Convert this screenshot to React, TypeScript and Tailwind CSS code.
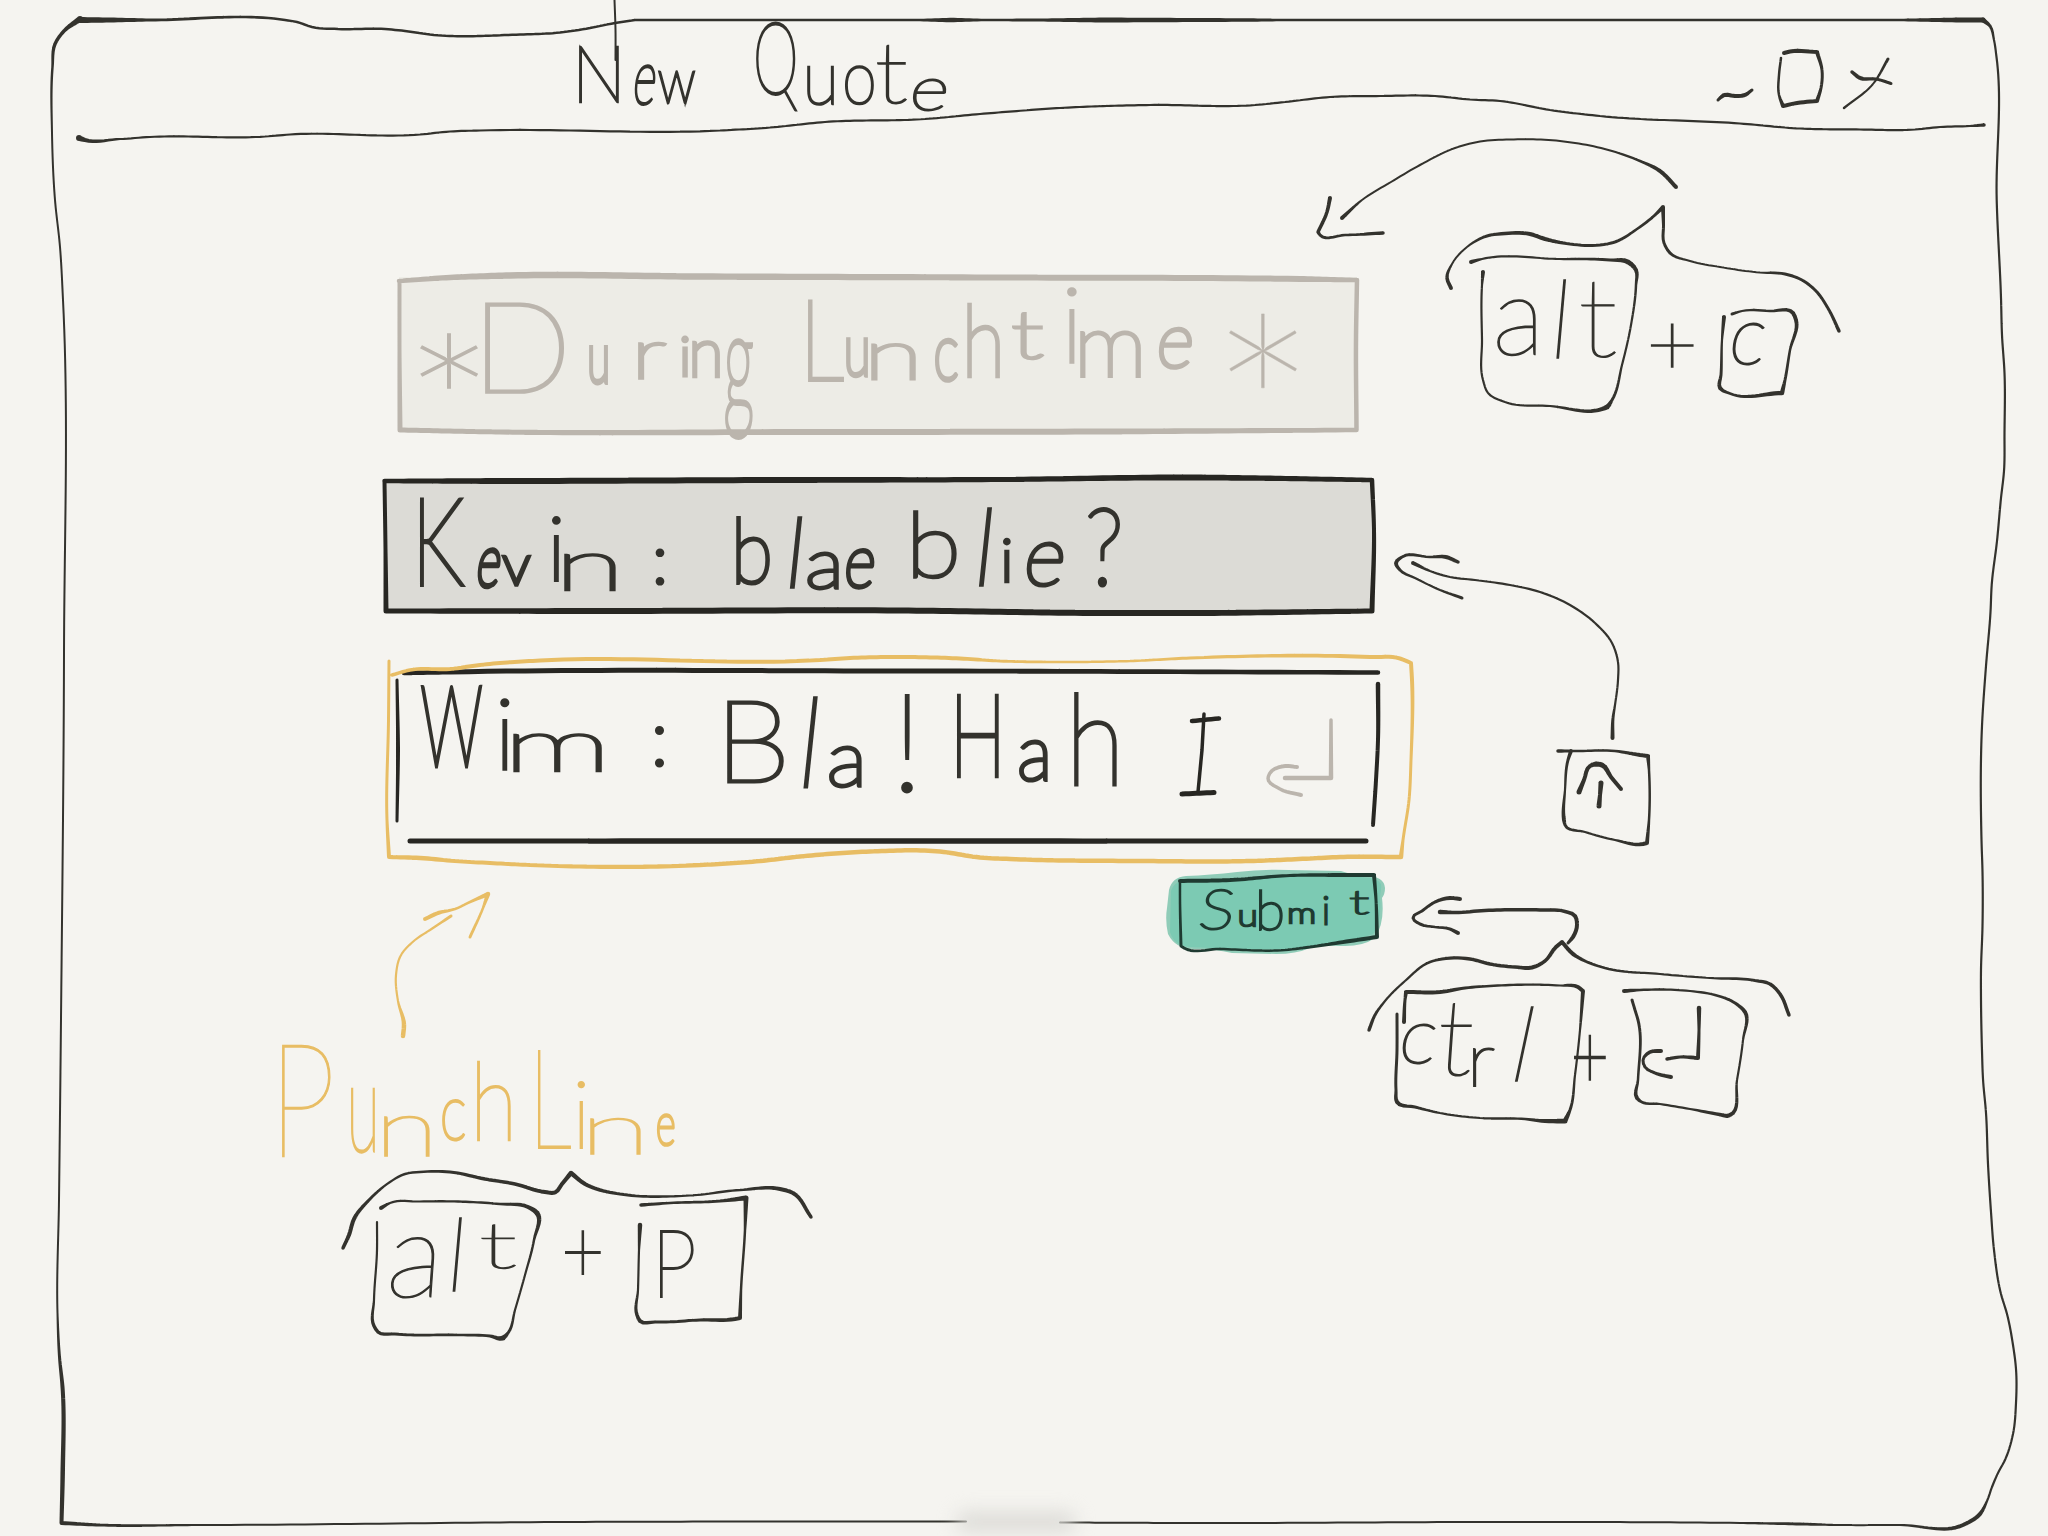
import React from "react";

/* ------------------------------------------------------------------ */
/* Pen strokes: "x,y,w" points (w carries over, "!" marks a corner)     */
/* ------------------------------------------------------------------ */

type Pt = { x: number; y: number; w: number };

function parseStroke(src: string): Pt[] {
  const pts: Pt[] = [];
  let w = 2.5;
  for (const token of src.trim().split(/\s+/)) {
    const corner = token.endsWith("!");
    const n = token.replace("!", "").split(",").map(Number);
    if (n.length > 2) w = n[2];
    const p = { x: n[0], y: n[1], w };
    pts.push(p);
    if (corner) pts.push({ ...p });
  }
  return pts;
}

function tangent(a: Pt | undefined, b: Pt, c: Pt | undefined): [number, number] {
  const l1 = a ? Math.hypot(b.x - a.x, b.y - a.y) : 0;
  const l2 = c ? Math.hypot(c.x - b.x, c.y - b.y) : 0;
  const u1 = a && l1 ? [(b.x - a.x) / l1, (b.y - a.y) / l1] : null;
  const u2 = c && l2 ? [(c.x - b.x) / l2, (c.y - b.y) / l2] : null;
  if (!u1 && !u2) return [0, 0];
  if (!u1) return [u2![0], u2![1]];
  if (!u2) return [u1[0], u1[1]];
  const tx = u1[0] * l2 + u2[0] * l1;
  const ty = u1[1] * l2 + u2[1] * l1;
  const l = Math.hypot(tx, ty) || 1;
  return [tx / l, ty / l];
}

function strokePath(src: string): string {
  const p = parseStroke(src);
  const dense: Pt[] = [];
  for (let i = 0; i < p.length - 1; i++) {
    const a = p[i];
    const b = p[i + 1];
    const len = Math.hypot(b.x - a.x, b.y - a.y);
    if (!len) continue;
    const ta = tangent(p[i - 1], a, b);
    const tb = tangent(a, b, p[i + 2]);
    const steps = Math.max(2, Math.min(24, Math.ceil(len / 4)));
    for (let s = 0; s <= steps; s++) {
      const t = s / steps;
      const t2 = t * t;
      const t3 = t2 * t;
      const h1 = 2 * t3 - 3 * t2 + 1;
      const h2 = t3 - 2 * t2 + t;
      const h3 = -2 * t3 + 3 * t2;
      const h4 = t3 - t2;
      dense.push({
        x: h1 * a.x + h2 * ta[0] * len + h3 * b.x + h4 * tb[0] * len,
        y: h1 * a.y + h2 * ta[1] * len + h3 * b.y + h4 * tb[1] * len,
        w: a.w + (b.w - a.w) * t,
      });
    }
  }
  const f = (n: number) => n.toFixed(3);
  let d = "";
  dense.forEach((q, i) => {
    const r = q.w / 2;
    d += `M${f(q.x - r)} ${f(q.y)}a${f(r)} ${f(r)} 0 1 1 ${f(2 * r)} 0a${f(r)} ${f(r)} 0 1 1 ${f(-2 * r)} 0z`;
    const n = dense[i + 1];
    if (!n) return;
    const l = Math.hypot(n.x - q.x, n.y - q.y);
    if (!l) return;
    const nx = (n.y - q.y) / l;
    const ny = -(n.x - q.x) / l;
    const s = n.w / 2;
    d += `M${f(q.x + nx * r)} ${f(q.y + ny * r)}L${f(n.x + nx * s)} ${f(n.y + ny * s)}L${f(n.x - nx * s)} ${f(n.y - ny * s)}L${f(q.x - nx * r)} ${f(q.y - ny * r)}z`;
  });
  return d;
}

function Sketch({ view, className, strokes, children }: {
  view: string;
  className: string;
  strokes: string[];
  children?: React.ReactNode;
}) {
  return (
    <svg viewBox={view} className={"pointer-events-none absolute inset-0 size-full overflow-visible " + className} aria-hidden="true">
      {children}
      {strokes.map((s) => (
        <path key={s} d={strokePath(s)} fill="currentColor" />
      ))}
    </svg>
  );
}

/* ------------------------------------------------------------------ */
/* Hand lettering: hairline letters fitted to their own ink box and     */
/* thickened to one pen width                                           */
/* ------------------------------------------------------------------ */

type Box = [x0: number, x1: number, top: number, bottom: number, slant?: number];

const LINE = 120;
const HAIRLINE = 0.02;
const NARROW = "l:!i";
const ctx = document.createElement("canvas").getContext("2d")!;

function measure(ch: string) {
  ctx.font = "100 200px Lato";
  const m = ctx.measureText(ch);
  return {
    left: -m.actualBoundingBoxLeft / 200,
    width: (m.actualBoundingBoxRight + m.actualBoundingBoxLeft) / 200,
    up: m.actualBoundingBoxAscent / 200,
    down: m.actualBoundingBoxDescent / 200,
    asc: m.fontBoundingBoxAscent / 200,
    desc: m.fontBoundingBoxDescent / 200,
  };
}

function Hand({ text, top, boxes, className, pen }: {
  text: string;
  top: number;
  boxes: Box[];
  className: string;
  pen: number;
}) {
  let k = 0;
  const letters = [...text].map((ch, i) => {
    if (ch === " ") {
      return { ch, style: { width: boxes[k][0] - boxes[k - 1][1], fontSize: 20 } };
    }
    const [x0, x1, y0, y1, slant = 0] = boxes[k];
    const next = boxes[k + 1];
    k += 1;
    const touching = next && text[i + 1] !== " ";
    const m = measure(ch);
    let ink = pen;
    let size = 0;
    let sx = 1;
    for (let pass = 0; pass < 4; pass++) {
      size = (y1 - y0 - ink) / (m.up + m.down);
      sx = NARROW.includes(ch) ? 1 : (x1 - x0) / (m.width * size + ink);
      ink = Math.max(0.5, (2 * pen) / (1 + sx) - HAIRLINE * size);
    }
    const baseline = (LINE - (m.asc + m.desc) * size) / 2 + m.asc * size;
    const middle = baseline - ((m.up - m.down) / 2) * size - LINE / 2;
    const dy = y1 - ink / 2 - m.down * size - top - baseline;
    const centre = (x1 - x0) / 2 - (m.left + m.width / 2) * size * sx;
    const dx = centre + Math.tan((slant * Math.PI) / 180) * middle;
    return {
      ch,
      style: {
        width: (touching ? next[0] : x1) - x0,
        fontSize: size,
        WebkitTextStrokeWidth: ink,
        transform: `translate(${dx}px, ${dy}px) skewX(${-slant}deg) scaleX(${sx})`,
      },
    };
  });
  return (
    <span className={"flex h-[120px] font-['Lato',sans-serif] font-thin whitespace-pre [stroke-linejoin:round] " + className}>
      {letters.map((l, i) => (
        <span key={i} className="block shrink-0 origin-left leading-[120px]" style={l.style}>
          {l.ch}
        </span>
      ))}
    </span>
  );
}

/* ------------------------------------------------------------------ */
/* Stroke data                                                          */
/* ------------------------------------------------------------------ */

const windowFrame = [
  "80,19,6 64,31,3.5 55,44,3.5 52.5,67,2.5 52,133,2 55,200 60,247 63,300 64,653 61,1019 59,1200 57.5,1313 59.5,1357,3 62.5,1387,4 62.7,1473,4.5 61.5,1523,4!  100,1525,3 200,1525,2 560,1522 850,1521.5 966,1521.5",
  "1060,1522.5,2 1200,1523 1500,1522 1740,1523 1800,1524,3 1840,1525,2 1900,1525 1963,1525,4 1980,1514,4 1987,1501,2.2 1992,1487 1999,1471 2004,1462 2013,1434 2016,1403 2016,1369 2013,1345 2007,1314 2001,1294 1994,1250 1991,1212 1988,1164 1986,1113 1983,1079 1982,1051 1981,1000 1981,970 1982.5,926 1982.5,872 1981.5,840 1982,726 1986,666 1990.5,612 1991.7,585 1997,541 2001,498 2004,471 2004.5,433 2004.5,373 2002,335 2001,298 1996.7,200 1996.5,57 1994,40 1990,26,3 1983,20,5",
  "80,20,6 110,20,5 150,20,3 285,20,2.5 297,22 312,27 338,29 385,29 405,31 430,34.5 520,34.5 560,32.5 590,28 615,23 635,20! 920,20 950,20,4.5 985,20,2.5 1040,20,3 1103,20,5 1250,20,3.5 1280,20,2.5 1900,20 1960,20,5 1983,20",
];

const titleRule = [
  "79,138,6 85,140,4 120,139,2.2 150,137 265,136.5 290,134.5 420,134.5 450,131.5 480,130.5 720,130.5 770,127.5 825,122 925,119 980,114 1024,110.5 1060,108 1150,105 1255,105 1285,102 1330,97 1380,96 1435,96 1470,99.5 1500,101 1550,110 1600,116 1740,123.5 1800,128.5 1860,129.5 1915,129.5 1940,127 1970,126 1984,125,3.5",
  "614.5,0,2 615.5,30 615.5,60",
];

const controls = [
  "1718,100,3 1724,95,4 1735,96,4 1745,95,4 1752,90,3",
  "1781,58,2.5 1779,75 1779,95 1783,106,4! 1797,103 1817,101! 1821,88,3 1822,70 1817,52,4! 1790,51.5,4 1784,53,4",
  "1852,72,3.5 1860,78,4 1876,79,3 1891,83.5",
  "1888,59,3 1873,84,2 1844,108,2.5",
];

const notes = [
  "1342,218,4 1362,200,2 1391,182 1420,165 1455,148 1480,141.5 1510,139.5 1560,141 1612,151 1640,161,2.5 1660,171,4 1676,187",
  "1330,198,4 1327,212,3.5 1318,232,3.5! 1320,235,3 1345,235,2.5 1383,233,3.5",
  "1451,288,4 1447,278,3.5 1452,264,2 1467,247 1487,236,3 1505,233.5,3.5 1530,234,4 1545,239,4 1570,244,3 1600,245 1615,242 1637,229,2.5 1655,215,3 1663,207,4! 1663.5,225,3 1664,243 1670,253 1690,261,2 1720,267 1760,272.5 1785,274,3 1800,279 1815,290 1829,310 1839,331,3.5",
  "1413,563,4 1430,571,2.2 1450,577 1475,580 1510,585 1540,592 1570,605 1595,623 1612,643 1618,662 1618,680 1615,705 1613,718,3 1612.5,738,4",
  "1458,562,3.5 1446,557,4 1430,557,2.5 1402,557,3 1396,563,4 1400,570,3 1415,578,2.2 1440,590 1462,598,3",
  "1460,899,4 1450,898 1435,902,3 1422,911 1413,918 1420,924 1435,927,2.5 1450,929,3 1458,933,4",
  "1440,912,4.5 1455,912.5,3.5 1485,910.5 1540,910 1565,911.5 1575,916,4 1577,924 1573,937 1568,943,3",
  "1369,1030,3.5 1375,1015,3 1385,1001,2.2 1405,981 1430,962,2.5 1442,959,3 1470,959,3.5 1490,964 1515,967 1532,967.5,4 1545,961,3.5 1556,947,4 1562,942! 1573,954 1585,961,3 1605,968,2.5 1660,974,2.2 1710,978 1755,980.5,3 1770,984,3.5 1780,994 1789,1015",
  "343,1248,3.5 349,1235,4 354,1219 370,1199,3 390,1182,2.2 405,1174,2.5 420,1172 450,1172,3 485,1179,3.5 515,1184 545,1192,4 555,1192.5 562,1184 571,1173,4.5! 585,1184,4 600,1190,3.5 620,1194,3 690,1195.5,2.2 740,1190,2.5 780,1189,4 793,1193 811,1217,3.5",
];

const punchArrow = [
  "403,1036,4.5 404,1025 398,1001,2.2 396,975 400,957 415,940 430,930 451,916,3",
  "425,919,4 438,913 455,909,2.5 470,902 488,894,4.5! 483,908,2.5 470,937,3",
];

const altC = [
  "1471,262,4 1482,259,2.2 1560,259 1610,260,3 1628,262,5 1636,270,4 1636,285,2.5 1631,325,2.2 1622,365 1612,400,3 1607,407,5 1602,409,4 1550,406,2.2 1505,402 1488,393 1483,380 1482,340 1482,285 1483,272,4",
  "1732,314,3 1742,311,2.2 1770,311,2.5 1793,313,4 1796,320 1790,350,2.5 1785,380,3 1782,393,4.5! 1730,393.5,2.5 1720,388,4 1721,375,3 1722,340,2.2 1724,317,4",
];

const upKey = [
  "1558,751,3.5 1575,751,2.5 1615,751 1640,755,4 1648,756! 1649,770,2.5 1649,820 1647,843,4! 1643,844 1615,840,2.2 1585,832 1565,825,3 1564,820,4 1565,790,2.2 1568,760,3 1571,751,4",
  "1579,792,5 1584,780,4 1590,766 1596,764,5 1602,765 1611,777,4 1621,789",
  "1601,783,5 1600,795,4 1599,806,5",
];

const ctrlEnter = [
  "1404,1022,4 1405,1000,3 1406,992,4! 1440,992 1465,988,3 1490,986,2.5 1560,985.5,2.2 1578,987,4 1583,991! 1580,1030,2.2 1575,1075 1570,1110,3 1565,1121,5! 1545,1121,4 1525,1119,2.5 1480,1118,2.2 1440,1113 1415,1107,3 1397,1102,4 1396,1090,3 1397,1050 1397,1014",
  "1624,991,4 1640,990,2.5 1690,991,2.2 1715,995,2.5 1735,1003,3 1745,1012,4 1743,1040,2.2 1737,1080 1730,1115,4 1727,1116! 1690,1109,2.2 1660,1104 1640,1101,3 1637,1098,4 1638,1080,2.5 1638,1020,3 1635,1010 1632,1000",
  "1699,1008,4.5 1699,1030,3 1698,1058,4! 1680,1057,3 1667,1059,3.5",
  "1661,1051,4 1650,1052,3.5 1643,1060,3 1645,1067 1655,1073 1671,1077,4",
];

const altP = [
  "381,1208,4 390,1203,2.2 420,1201.5 500,1204,2.5 528,1207,4 537,1213,5 534,1240,2.5 525,1275,2.2 515,1310 508,1333,3 503,1338,5 490,1336,3 460,1335,2.5 395,1334,3 378,1332,3.5 374,1326 374,1300,2.2 377,1250 377,1222",
  "641,1205,3.5 670,1203,2.5 720,1201,3 746,1198,5! 745,1230,2.5 741,1290 740,1318,4! 735,1319,4 700,1320,3 655,1322 640,1321,4 637,1315,3.5 638,1290,2.2 639,1250 640,1225,4.5",
];

const contextFrame = [
  "399,281,4.5 450,277.5,5.5 510,275.5,6.5 700,276.5 1000,277.5,6 1300,279 1357,280,4.5! 1356,340,4.5 1356.5,430! 1100,431.5,6 800,432 500,432,5 400,430! 399.5,350,4 399.5,281",
];

const lineFrame = [
  "384.5,481,4.5 500,481,6 780,480 1000,479.5,5 1190,477.5,6 1250,478,5.5 1372,480,4.5! 1374,530,4 1372,611,5! 1200,613,6 1100,613 900,610.5 600,611 386,611,5! 385.5,550,4 384.5,481",
];

const inputFrame = [
  "404,673,4.5 450,672,5 900,671 1378,672.5,4.5",
  "410,841,5 800,841,5.5 1366,841,5",
  "397,680,3 398,750,4 397,821,3",
  "1378,684,4.5 1378,740,4 1376,780 1373,825",
  "1192,721,4.5! 1219,718.5,4.5",
  "1204,714,3.5! 1202,750! 1198,792",
  "1182,794,5 1214,792.5",
];

const returnHint = [
  "1331,720,3.5 1331,778,4.5! 1285,778",
  "1297,767,4 1285,766 1270,773,3.5 1268,778 1280,789 1301,795,4",
];

const punchFrame = [
  "389,661,3 388.5,720 387,820 389,857,4! 420,858,4.5 455,861,4 490,863 530,865 700,865,4.5 760,861 800,856.5 870,851.5 940,851.5 980,857.5 1010,859 1140,861 1250,861 1310,858.5 1340,857 1401,857,4.5! 1403,840,3 1409,800 1411,760 1412,680,4 1411,663! 1400,658.5 1370,657 1190,658,3 1130,661,2.5 1060,662 1000,661,3 960,658.5,4 900,657 850,658 820,660 540,660.5,4 500,663 480,665 450,669 410,670,3.5 392,675",
];

const submitFrame = [
  "1180,881,4 1230,880 1290,875.5,3 1340,875,4 1374,875! 1376,900,3 1377,937,4! 1350,941 1310,947,3 1285,950,2.5 1220,949 1184,948,3 1181,946! 1180,900,2.5 1180,881",
];

/* ------------------------------------------------------------------ */

export default function App() {
  return (
    <div className="relative flex h-[1536px] w-[2048px] flex-col overflow-hidden bg-[#f5f4f0] text-[#33322d]">
      <Sketch view="0 0 2048 1536" className="" strokes={windowFrame} />
      <div className="absolute top-[1512px] left-[956px] h-[20px] w-[120px] rounded-full bg-[#dddcd8] blur-[9px]" />

      <header className="relative flex h-[140px] shrink-0 pt-[10px] pl-[579px]">
        <Sketch view="0 0 2048 140" className="" strokes={[...titleRule, ...controls]} />
        <h1>
          <Hand
            text="New Quote"
            top={10}
            pen={3.8}
            className=""
            boxes={[
              [578, 618, 46, 104], [634, 654, 64, 106, 6], [657, 694, 70, 105],
              [755, 796, 22, 112], [806, 833, 65, 106], [844, 873, 65, 106], [876, 906, 46, 105], [912, 945, 79, 112, 8],
            ]}
          />
        </h1>
      </header>

      <main className="relative flex w-[1414px] flex-col">
        <section className="relative mt-[137px] ml-[399px] h-[154px] w-[958px] bg-[#edece6] pt-[13px] pl-[21px] text-[#bbb5ad]">
          <Sketch view="399 277 958 154" className="" strokes={contextFrame} />
          <Hand
            text="*During Lunchtime*"
            top={290}
            pen={5.8}
            className="relative"
            boxes={[
              [420, 478, 332, 388], [485, 564, 302, 394], [589, 608, 345, 386], [638, 667, 341, 380],
              [682, 688, 337, 378], [692, 720, 340, 379], [725, 753, 338, 440],
              [808, 844, 299, 382], [846, 868, 338, 379], [871, 916, 342, 380], [935, 958, 337, 383],
              [967, 1000, 302, 378], [1012, 1044, 312, 360], [1068, 1076, 286, 364], [1080, 1141, 330, 378],
              [1159, 1192, 327, 370, 6], [1229, 1297, 312, 387],
            ]}
          />
        </section>

        <section className="relative mt-[48px] ml-[384px] h-[133px] w-[990px] bg-[#dcdbd6] pt-[4px] pl-[36px]">
          <Sketch view="384 479 990 133" className="text-[#272622]" strokes={lineFrame} />
          <Hand
            text="Kevin: blae blie?"
            top={483}
            pen={5.6}
            className="relative"
            boxes={[
              [418, 462, 497, 587], [476, 498, 547, 589, 8], [500, 529, 556, 588], [551, 558, 517, 583], [562, 614, 552, 591], [654, 662, 548, 586],
              [734, 768, 515, 585], [791, 797, 516, 589, 6], [805, 837, 552, 591], [844, 872, 548, 590, 6],
              [911, 955, 510, 579], [980, 987, 506, 586, 6], [1001, 1009, 537, 583], [1025, 1061, 541, 587, 8], [1086, 1118, 508, 588],
            ]}
          />
        </section>

        <section className="relative mt-[45px] ml-[388px] h-[208px] w-[1026px] pt-[23px] pl-[33px]">
          <Sketch view="388 657 1026 208" className="text-[#272622]" strokes={inputFrame} />
          <Sketch view="388 657 1026 208" className="text-[#e8bd64]" strokes={punchFrame} />
          <Sketch view="388 657 1026 208" className="text-[#bbb5ad]" strokes={returnHint} />
          <Hand
            text="Wim: Bla! Hah"
            top={680}
            pen={5.6}
            className="relative"
            boxes={[
              [421, 482, 685, 769], [502, 508, 697, 771], [513, 602, 733, 772], [656, 663, 726, 768],
              [727, 784, 700, 783], [807, 814, 695, 788, 6], [829, 862, 745, 789], [903, 911, 695, 794],
              [957, 999, 693, 778], [1019, 1048, 739, 783], [1074, 1117, 691, 786],
            ]}
          />
        </section>

        <button className="relative mt-[5px] ml-[1166px] h-[84px] w-[218px] pl-[32px] text-[#1f3a31]">
          <Sketch view="1166 870 218 84" className="" strokes={submitFrame}>
            <path
              fill="#90ccb8"
              d="M1169 890Q1172 877 1186 876Q1210 875 1237 872Q1262 869 1289 870L1341 871Q1352 875 1366 876Q1384 876 1385 888Q1385 894 1382 898Q1385 922 1375 938Q1362 947 1341 946Q1322 945 1310 948Q1296 954 1276 954L1232 953Q1214 949 1196 949Q1176 950 1168 934Q1165 920 1167 908Z"
            />
            <path
              fill="#7ccab3"
              d="M1171 891Q1174 880 1190 880Q1260 879 1289 875L1340 875L1370 878Q1383 880 1381 889L1380 898Q1382 922 1373 934Q1350 943 1300 948Q1270 950 1232 949L1190 947Q1174 946 1170 932Z"
            />
          </Sketch>
          <Hand
            text="Submit"
            top={852}
            pen={3.6}
            className="relative -mt-[18px]"
            boxes={[[1200, 1230, 889, 931, 8], [1236, 1253, 910, 928], [1261, 1285, 890, 932], [1286, 1312, 907, 924], [1316, 1321, 895, 925], [1343, 1363, 892, 916]]}
          />
        </button>
      </main>

      <aside className="absolute inset-0">
        <Sketch view="0 0 2048 1536" className="" strokes={notes} />
        <Sketch view="0 0 2048 1536" className="text-[#e8bd64]" strokes={punchArrow} />

        <div className="absolute top-[256px] left-[1471px] h-[156px] w-[330px] pt-[4px] pl-[26px]">
          <Sketch view="1471 256 330 156" className="" strokes={altC} />
          <Hand
            text="alt + c"
            top={260}
            pen={3.6}
            className="relative"
            boxes={[[1497, 1536, 299, 357], [1559, 1563, 278, 358, 5], [1581, 1616, 282, 359], [1651, 1694, 323, 368], [1733, 1763, 323, 366, 8]]}
          />
        </div>

        <div className="absolute top-[748px] left-[1556px] h-[100px] w-[96px]">
          <Sketch view="1556 748 96 100" className="" strokes={upKey} />
        </div>

        <div className="absolute top-[983px] left-[1394px] h-[142px] w-[354px] pt-[2px] pl-[9px]">
          <Sketch view="1394 983 354 142" className="" strokes={ctrlEnter} />
          <Hand
            text="ctrl +"
            top={985}
            pen={3.6}
            className="relative"
            boxes={[[1405, 1436, 1023, 1064, 8], [1442, 1474, 1003, 1077, 4], [1475, 1497, 1047, 1087], [1524, 1528, 1006, 1082, 12], [1576, 1608, 1035, 1081]]}
          />
        </div>

        <div className="absolute top-[1040px] left-[282px] text-[#e8bd64]">
          <Hand
            text="PunchLine"
            top={1040}
            pen={4}
            className=""
            boxes={[
              [282, 331, 1045, 1158], [351, 375, 1087, 1153], [384, 430, 1115, 1157], [442, 465, 1098, 1142], [477, 511, 1060, 1141],
              [538, 571, 1050, 1149], [579, 584, 1080, 1149], [590, 641, 1118, 1155], [657, 675, 1113, 1147],
            ]}
          />
        </div>

        <div className="absolute top-[1196px] left-[372px] h-[144px] w-[376px] pt-[4px] pl-[20px]">
          <Sketch view="372 1196 376 144" className="" strokes={altP} />
          <Hand
            text="alt + P"
            top={1200}
            pen={3.6}
            className="relative"
            boxes={[[394, 436, 1237, 1299, 4], [457, 461, 1217, 1292, 5], [483, 518, 1225, 1270], [567, 603, 1230, 1275], [662, 696, 1230, 1298]]}
          />
        </div>
      </aside>
    </div>
  );
}
